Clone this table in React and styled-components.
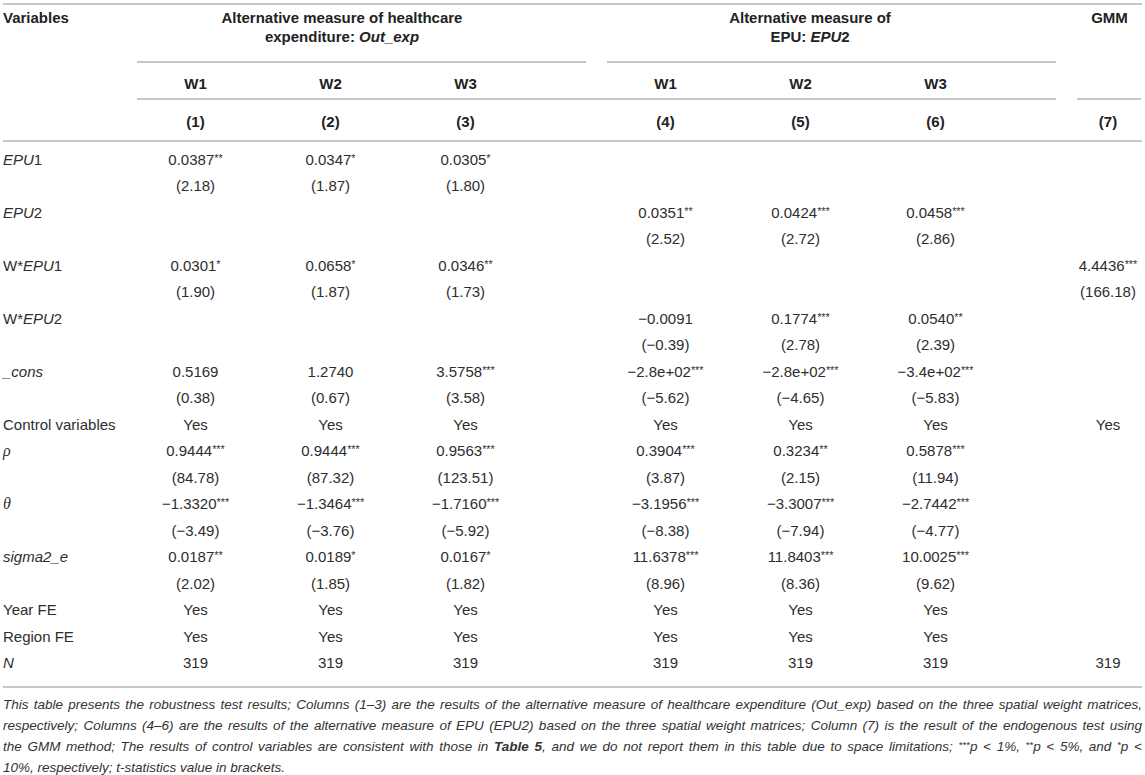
import React from "react";
import styled, { createGlobalStyle } from "styled-components";

const GlobalStyle = createGlobalStyle`
  html, body {
    margin: 0;
    padding: 0;
    background: #fff;
  }
  body {
    font-family: "Liberation Sans", Arial, sans-serif;
    color: #2e2e2e;
  }
`;

// variables | c1 c2 c3 | gap | c4 c5 c6 | gap | c7
const COLS = "128px 135px 135px 135px 65px 135px 135px 135px 68px 74px";
const TRACK = [2, 3, 4, 6, 7, 8, 10];

const Page = styled.div`
  width: 1145px;
`;

const Rule = styled.div`
  height: 2px;
  background: #c6c6c6;
  margin: ${(p) => p.$m || "0 3px"};
`;

const HeadGrid = styled.div`
  display: grid;
  grid-template-columns: ${COLS};
  font-size: 15px;
  font-weight: bold;
  color: #222;
`;

const HeadCell = styled.div`
  grid-column: ${(p) => p.$col};
  grid-row: ${(p) => p.$row};
  text-align: ${(p) => p.$align || "center"};
  line-height: ${(p) => p.$lh || "20px"};
  padding: ${(p) => p.$pad || "0"};
  white-space: nowrap;
`;

const Seg = styled.div`
  grid-column: ${(p) => p.$col};
  grid-row: ${(p) => p.$row};
  height: 2px;
  background: #c6c6c6;
  margin: 0 ${(p) => p.$mr}px 0 ${(p) => p.$ml}px;
`;

const Body = styled.div`
  padding: 4px 0 10px;
`;

const Row = styled.div`
  display: grid;
  grid-template-columns: ${COLS};
  height: 26.5px;
  align-items: center;
  font-size: 15px;
`;

const Label = styled.div`
  grid-column: 1;
  padding-left: 3px;
  white-space: nowrap;
`;

const Greek = styled.i`
  font-family: "Liberation Serif", "Times New Roman", serif;
  font-size: 16px;
`;

const Val = styled.div`
  grid-column: ${(p) => p.$col};
  text-align: center;
  white-space: nowrap;
`;

const Stars = styled.sup`
  font-size: 0.72em;
  line-height: 0;
  vertical-align: 0.3em;
`;

const Note = styled.div`
  padding: 6px 3px 0;
  font-size: 13.5px;
  font-style: italic;
  line-height: 21px;
  color: #333;
`;

const NoteLine = styled.div`
  text-align: justify;
  text-align-last: ${(p) => (p.$last ? "left" : "justify")};
`;

const Num = ({ v }) => {
  const m = v.match(/^(.*?)(\*+)$/);
  if (!m) return v;
  return (
    <>
      {m[1]}
      <Stars>{m[2]}</Stars>
    </>
  );
};

const Y = "Yes";
const rows = [
  { label: <><i>EPU</i>1</>, v: ["0.0387**", "0.0347*", "0.0305*"] },
  { v: ["(2.18)", "(1.87)", "(1.80)"] },
  { label: <><i>EPU</i>2</>, v: [null, null, null, "0.0351**", "0.0424***", "0.0458***"] },
  { v: [null, null, null, "(2.52)", "(2.72)", "(2.86)"] },
  { label: <>W*<i>EPU</i>1</>, v: ["0.0301*", "0.0658*", "0.0346**", null, null, null, "4.4436***"] },
  { v: ["(1.90)", "(1.87)", "(1.73)", null, null, null, "(166.18)"] },
  { label: <>W*<i>EPU</i>2</>, v: [null, null, null, "\u22120.0091", "0.1774***", "0.0540**"] },
  { v: [null, null, null, "(\u22120.39)", "(2.78)", "(2.39)"] },
  {
    label: <i>_cons</i>,
    v: ["0.5169", "1.2740", "3.5758***", "\u22122.8e+02***", "\u22122.8e+02***", "\u22123.4e+02***"],
  },
  { v: ["(0.38)", "(0.67)", "(3.58)", "(\u22125.62)", "(\u22124.65)", "(\u22125.83)"] },
  { label: "Control variables", v: [Y, Y, Y, Y, Y, Y, Y] },
  {
    label: <Greek>ρ</Greek>,
    v: ["0.9444***", "0.9444***", "0.9563***", "0.3904***", "0.3234**", "0.5878***"],
  },
  { v: ["(84.78)", "(87.32)", "(123.51)", "(3.87)", "(2.15)", "(11.94)"] },
  {
    label: <Greek>θ</Greek>,
    v: [
      "\u22121.3320***",
      "\u22121.3464***",
      "\u22121.7160***",
      "\u22123.1956***",
      "\u22123.3007***",
      "\u22122.7442***",
    ],
  },
  {
    v: ["(\u22123.49)", "(\u22123.76)", "(\u22125.92)", "(\u22128.38)", "(\u22127.94)", "(\u22124.77)"],
  },
  {
    label: <i>sigma2_e</i>,
    v: ["0.0187**", "0.0189*", "0.0167*", "11.6378***", "11.8403***", "10.0025***"],
  },
  { v: ["(2.02)", "(1.85)", "(1.82)", "(8.96)", "(8.36)", "(9.62)"] },
  { label: "Year FE", v: [Y, Y, Y, Y, Y, Y] },
  { label: "Region FE", v: [Y, Y, Y, Y, Y, Y] },
  { label: <i>N</i>, v: ["319", "319", "319", "319", "319", "319", "319"] },
];

const Header = () => (
  <HeadGrid>
    <HeadCell $col="1" $row="1" $align="left" $lh="19px" $pad="3px 0 0 3px">
      Variables
    </HeadCell>
    <HeadCell $col="2 / 5" $row="1" $lh="19px" $pad="3px 0 15px 23px">
      Alternative measure of healthcare
      <br />
      expenditure: <i>Out_exp</i>
    </HeadCell>
    <HeadCell $col="6 / 9" $row="1" $lh="19px" $pad="3px 0 15px 19px">
      Alternative measure of
      <br />
      EPU: <i>EPU</i>2
    </HeadCell>
    <HeadCell $col="10" $row="1" $lh="19px" $pad="3px 0 0 3px">
      GMM
    </HeadCell>

    <Seg $col="2 / 6" $row="2" $ml={9} $mr={12} />
    <Seg $col="6 / 10" $row="2" $ml={9} $mr={15} />

    {["W1", "W2", "W3", "W1", "W2", "W3"].map((w, i) => (
      <HeadCell key={i} $col={TRACK[i]} $row="3" $pad="11px 0 4px">
        {w}
      </HeadCell>
    ))}

    <Seg $col="2 / 10" $row="4" $ml={9} $mr={15} />
    <Seg $col="10 / 11" $row="4" $ml={6} $mr={4} />

    {[1, 2, 3, 4, 5, 6, 7].map((n, i) => (
      <HeadCell key={n} $col={TRACK[i]} $row="5" $pad="12px 0 8px">
        ({n})
      </HeadCell>
    ))}
  </HeadGrid>
);

const App = () => (
  <Page>
    <GlobalStyle />
    <Rule $m="3px 3px 0" />
    <Header />
    <Rule />
    <Body>
      {rows.map((r, i) => (
        <Row key={i}>
          <Label>{r.label}</Label>
          {r.v.map((v, j) =>
            v ? (
              <Val key={j} $col={TRACK[j]}>
                <Num v={v} />
              </Val>
            ) : null
          )}
        </Row>
      ))}
    </Body>
    <Rule />
    <Note>
      <NoteLine>
        This table presents the robustness test results; Columns (1–3) are the results of the
        alternative measure of healthcare expenditure (Out_exp) based on the three spatial weight
        matrices,
      </NoteLine>
      <NoteLine>
        respectively; Columns (4–6) are the results of the alternative measure of EPU (EPU2) based
        on the three spatial weight matrices; Column (7) is the result of the endogenous test using
      </NoteLine>
      <NoteLine>
        the GMM method; The results of control variables are consistent with those in{" "}
        <b>Table 5</b>, and we do not report them in this table due to space limitations;{" "}
        <Stars>***</Stars>p &lt; 1%, <Stars>**</Stars>p &lt; 5%, and <Stars>*</Stars>p &lt;
      </NoteLine>
      <NoteLine $last>10%, respectively; t-statistics value in brackets.</NoteLine>
    </Note>
  </Page>
);

export default App;
